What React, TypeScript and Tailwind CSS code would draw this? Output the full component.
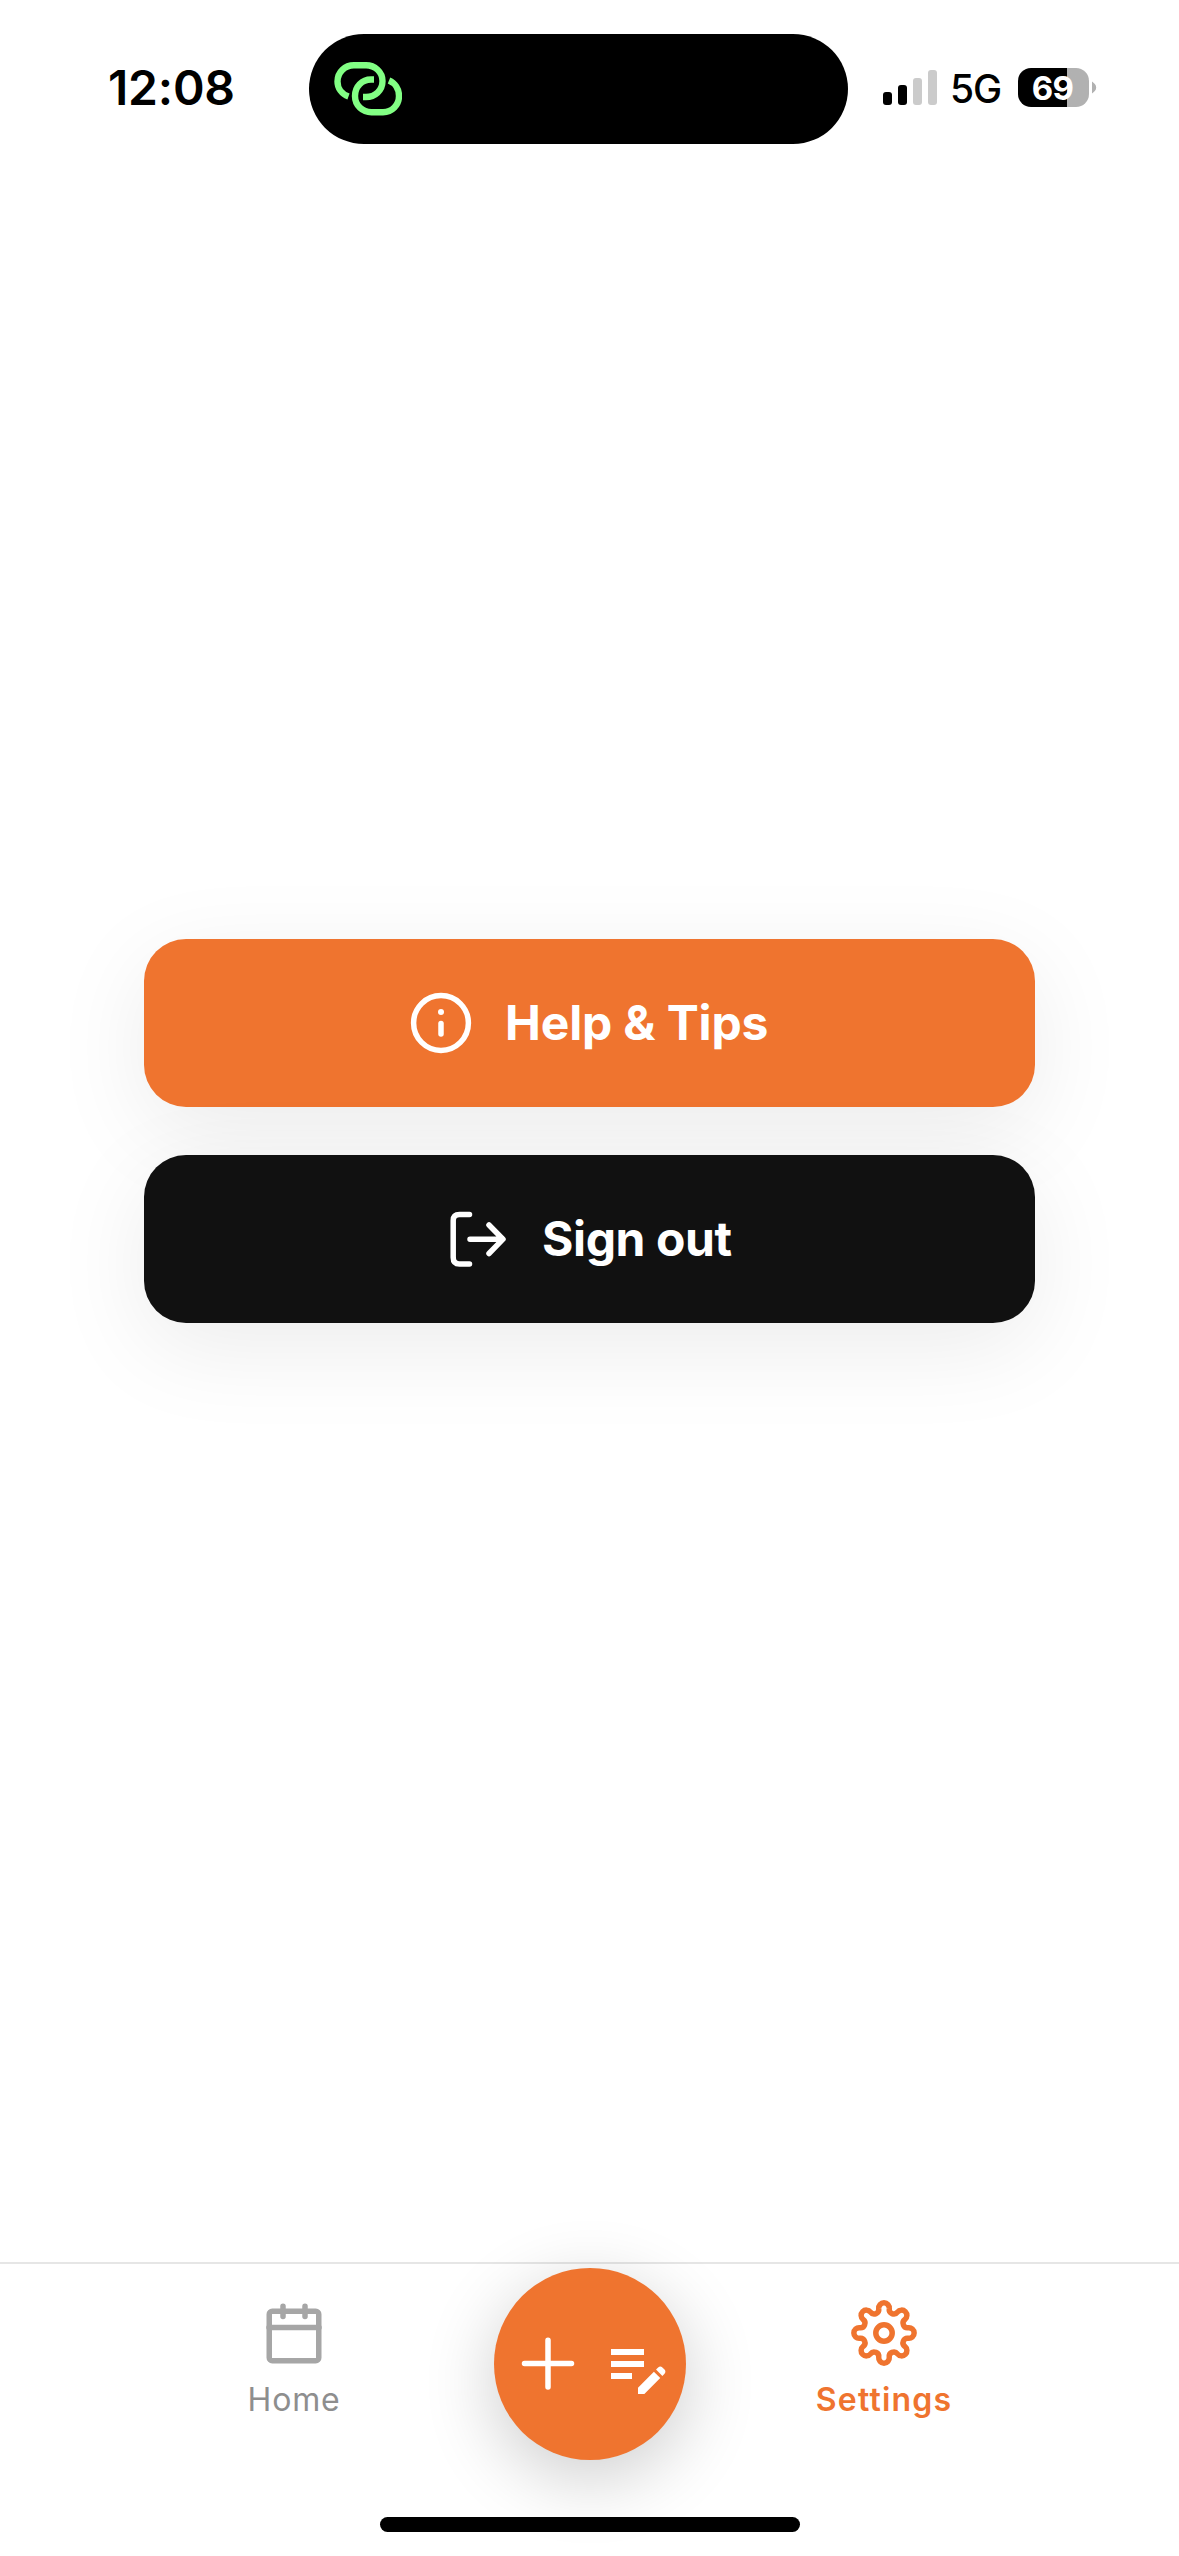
import { MdEditNote } from "react-icons/md";

const ORANGE = "#EF742F";

function gearPath(): string {
  const at = (deg: number) => {
    const a = ((deg - 90) * Math.PI) / 180;
    return `${(34 + 24.84 * Math.cos(a)).toFixed(2)} ${(34 + 24.84 * Math.sin(a)).toFixed(2)}`;
  };
  let d = `M${at(-12.25)}`;
  for (let k = 0; k < 8; k++) {
    d += `A5.3 5.3 0 1 1 ${at(k * 45 + 12.25)}`;
    d += `A4.56 4.56 0 0 0 ${at(k * 45 + 32.75)}`;
  }
  return d + "Z";
}

function StatusBar() {
  return (
    <header className="flex h-[177px] shrink-0 items-start">
      <div className="w-[309px] pt-[58px] pl-[108px] text-[48px] leading-[60px] font-semibold tracking-[-0.2px]">
        12:08
      </div>
      <div className="mt-[34px] flex h-[110px] w-[539px] items-center rounded-full bg-black pl-[25px]">
        <svg width="68" height="54" viewBox="0 0 68 54" fill="none" stroke="#82FF84" strokeWidth="6.4">
          <path d="M14.5 34.5C7.5 32 3.5 26 3.5 19.5C3.5 10 11 3.3 20 3.3H32C41 3.3 48.5 10 48.5 19C48.5 28.5 41 35 32 35H29" />
          <path d="M40 17.5H37C28 17.5 21 24.5 21 34C21 43.5 28.5 50.2 37.5 50.2H49C58 50.2 65 43 65 34C65 27 61 21 55 18.5" />
        </svg>
      </div>
      <div className="flex pt-[68px] pl-[35px]">
        <div className="flex h-[37px] items-end gap-[6px]">
          <span className="h-[13px] w-[9px] rounded-[3px] bg-black" />
          <span className="h-[20px] w-[9px] rounded-[3px] bg-black" />
          <span className="h-[27px] w-[9px] rounded-[3px] bg-[#cbcbcb]" />
          <span className="h-[35px] w-[9px] rounded-[3px] bg-[#cbcbcb]" />
        </div>
        <div className="w-[81px] pl-[13px] text-[39px] leading-[42px] font-medium tracking-[-1px]">5G</div>
        <div className="flex h-[39px] w-[71px] items-center justify-center rounded-[13px] bg-linear-to-r from-black from-69% to-[#b1b1b1] to-69% pt-px pr-[2px] text-[33px] leading-none font-bold tracking-[-0.8px] text-white">
          69
        </div>
        <svg className="mt-[13px] ml-[3px]" width="5" height="13" viewBox="0 0 5 13" fill="#b1b1b1">
          <path d="M0 0.5C2 2 4.2 3.5 4.2 6.5S2 11 0 12.5Z" />
        </svg>
      </div>
    </header>
  );
}

function Actions() {
  return (
    <main className="flex flex-1 flex-col gap-12 px-36 pt-[762px]">
      <button className="flex h-[168px] w-full shrink-0 items-center rounded-[42px] bg-[#EF742F] pl-[264px] text-white shadow-[0_24px_96px_rgba(0,0,0,0.08)]">
        <svg width="66" height="66" viewBox="0 0 66 66" fill="none" stroke="white" strokeWidth="5.5" strokeLinecap="round">
          <circle cx="33" cy="33" r="27.4" />
          <path d="M33 33.5V44" />
          <circle cx="33" cy="22" r="3" fill="white" stroke="none" />
        </svg>
        <span className="ml-[31px] text-[48px] leading-none font-bold tracking-[-0.15px] whitespace-nowrap">
          Help &amp; Tips
        </span>
      </button>
      <button className="relative flex h-[168px] w-full shrink-0 items-center rounded-[42px] bg-[#111111] pl-[301px] text-white shadow-[0_24px_96px_rgba(0,0,0,0.08)]">
        <svg width="66" height="66" viewBox="0 0 66 66" fill="none" stroke="white" strokeWidth="5.5" strokeLinecap="round" strokeLinejoin="round">
          <path d="M24.5 8.5H14.5Q8.2 8.5 8.2 14.5V51.5Q8.2 58 14.5 58H24.5" />
          <path d="M25 33.2H57.5M44 19L58 33.2L44 47.5" />
        </svg>
        <span className="ml-[31px] text-[48px] leading-none font-bold tracking-[-0.4px] whitespace-nowrap">
          Sign out
        </span>
      </button>
    </main>
  );
}

function TabBar() {
  return (
    <nav className="flex h-[294px] shrink-0 flex-col border-t-2 border-[#e6e6e6]">
      <div className="flex h-[253px] items-start justify-center">
        <div className="flex w-[397px] flex-col items-center pt-[35px] pr-[2px]">
          <svg width="66" height="68" viewBox="0 0 66 68" fill="none" stroke="#a6a6a6" strokeWidth="5.5" strokeLinecap="round">
            <rect x="8.25" y="12.2" width="49.5" height="49.5" rx="3" />
            <path d="M8 28.5H58M22 7.2V17.5M44 7.2V17.5" />
          </svg>
          <span className="mt-[13px] text-[32px] leading-[40px] tracking-[0.8px] text-[#8e8e8e]">Home</span>
        </div>
        <button className="relative mt-1 flex size-48 shrink-0 items-center rounded-full bg-[#EF742F] pl-[21px] text-white shadow-[0_18px_72px_rgba(0,0,0,0.2)]">
          <svg width="66" height="66" viewBox="0 0 66 66" fill="none" stroke="white" strokeWidth="5.5" strokeLinecap="round">
            <path d="M33 9.2V56M9.5 32.6H56.5" />
          </svg>
          <MdEditNote className="mt-1.5 ml-[21px] size-[72px] shrink-0" />
        </button>
        <div className="flex w-[397px] flex-col items-center pt-[35px]">
          <svg width="68" height="68" viewBox="0 0 68 68" fill="none" stroke={ORANGE} strokeWidth="5.5">
            <path d={gearPath()} />
            <circle cx="34" cy="34" r="8.2" />
          </svg>
          <span className="mt-[13px] text-[32px] leading-[40px] font-semibold tracking-[1.2px] text-[#EF742F]">
            Settings
          </span>
        </div>
      </div>
      <div className="relative h-[15px] w-[420px] shrink-0 self-center rounded-full bg-black" />
    </nav>
  );
}

export default function App() {
  return (
    <div className="flex h-[2556px] w-[1179px] flex-col overflow-hidden bg-white font-[Inter,sans-serif] text-black">
      <StatusBar />
      <Actions />
      <TabBar />
    </div>
  );
}
